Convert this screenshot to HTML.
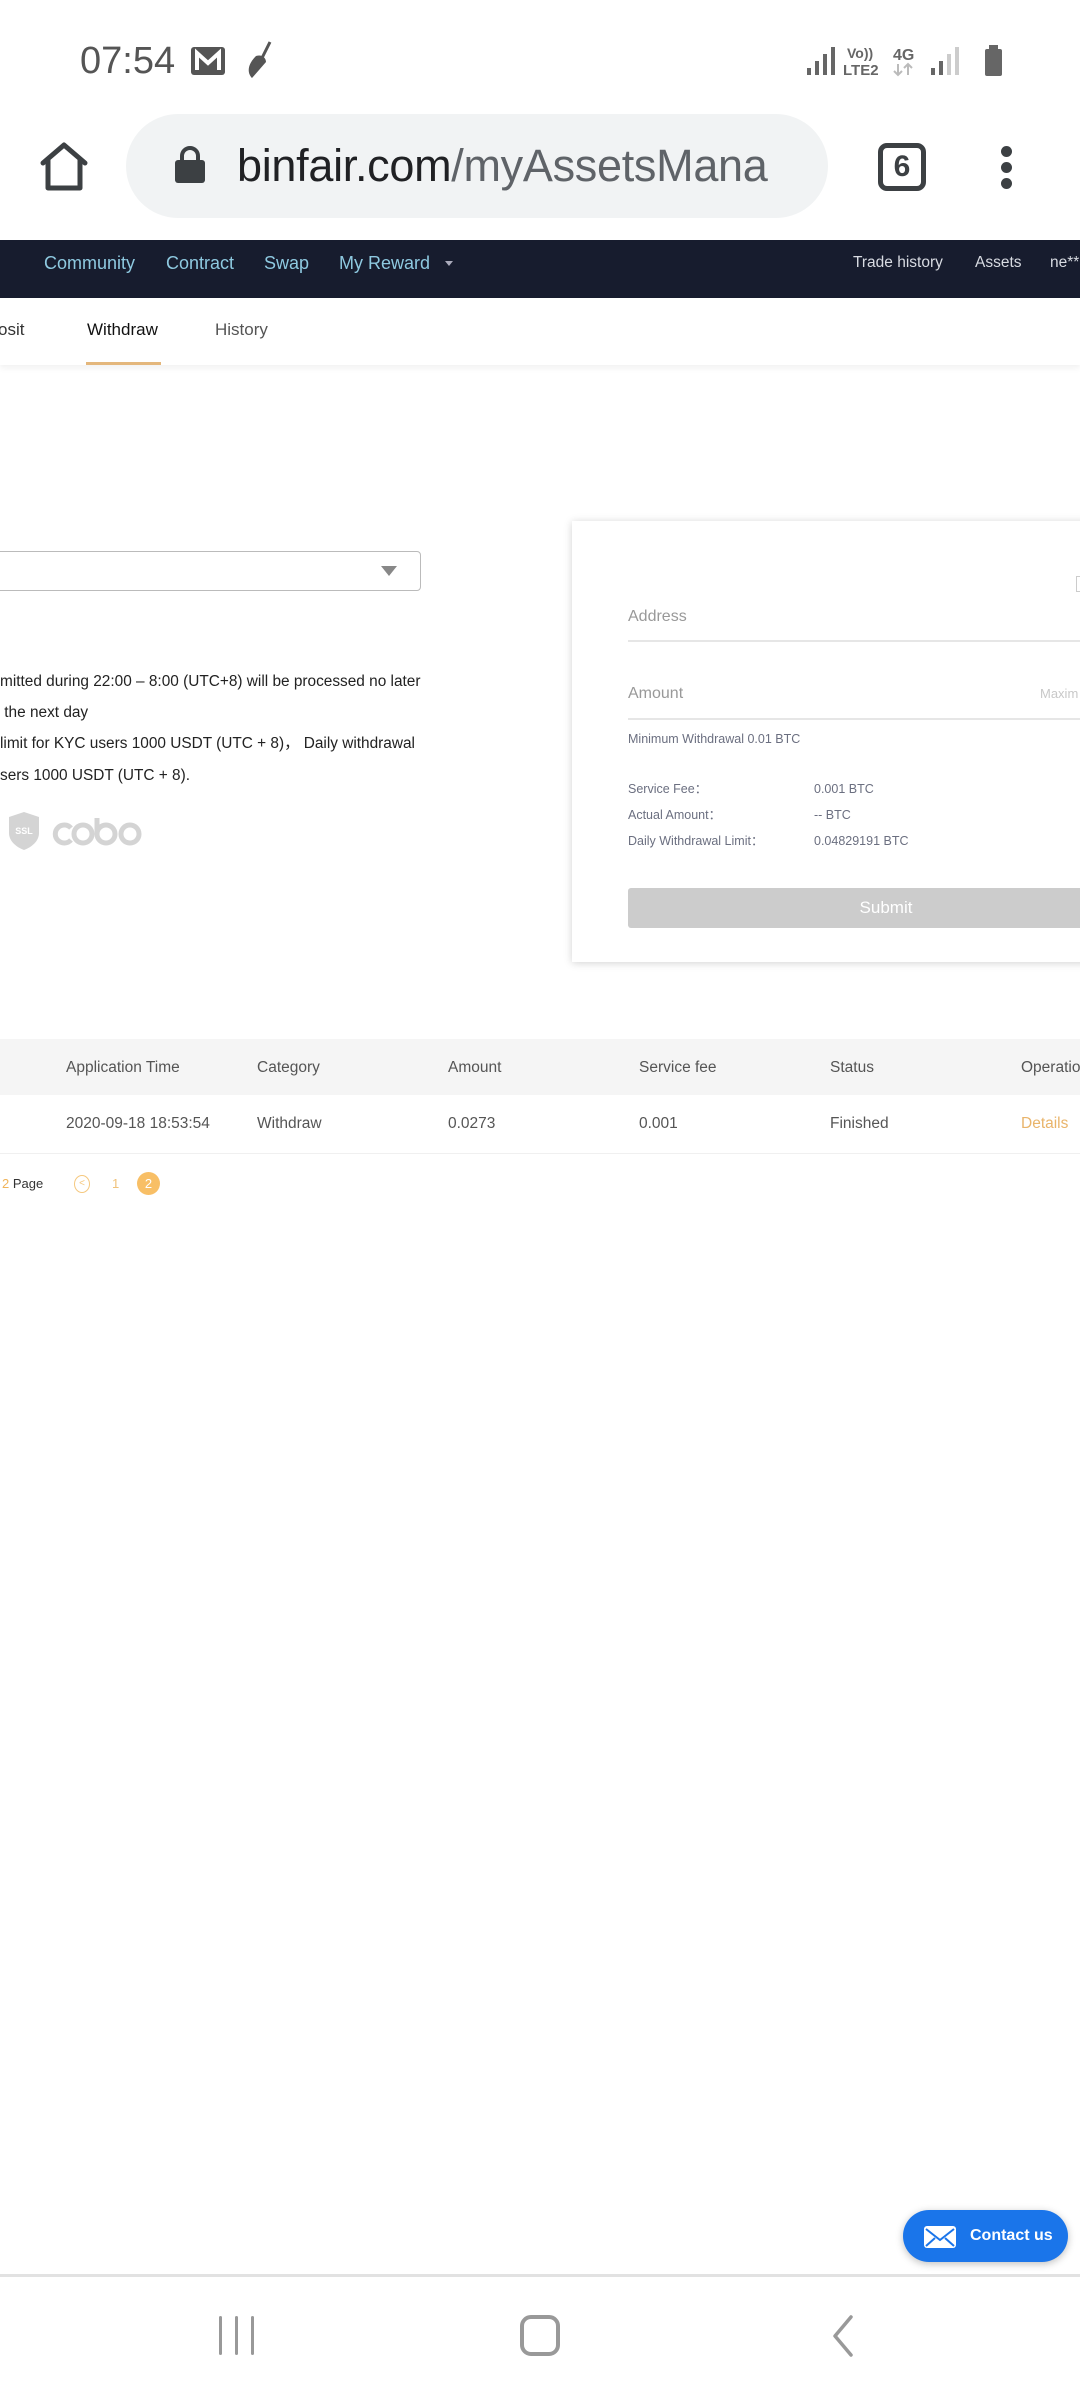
<!DOCTYPE html>
<html><head><meta charset="utf-8">
<style>
*{margin:0;padding:0;box-sizing:border-box}
body{width:1080px;height:2400px;position:relative;overflow:hidden;background:#fff;font-family:"Liberation Sans",sans-serif}
.a{position:absolute;white-space:nowrap}
</style></head><body>
<!-- status bar -->
<div class="a" style="left:80px;top:38px;font-size:38px;color:#555;line-height:46px">07:54</div>
<svg class="a" style="left:190px;top:46px" width="36" height="30" viewBox="0 0 36 30"><rect x="1" y="1" width="34" height="28" rx="3" fill="#555"/><path d="M7 24V7l11 10 11-10v17" stroke="#fff" stroke-width="4" fill="none"/></svg>
<svg class="a" style="left:244px;top:40px" width="32" height="40" viewBox="0 0 32 40"><path d="M26 2 18 18" stroke="#555" stroke-width="3"/><path d="M12 16c6-2 10 2 10 6L8 38c-4-4-6-12 4-22z" fill="#555"/></svg>
<svg class="a" style="left:805px;top:44px" width="200" height="34" viewBox="0 0 200 34">
<rect x="2" y="24" width="4" height="7" fill="#666"/><rect x="10" y="17" width="4" height="14" fill="#666"/><rect x="18" y="10" width="4" height="21" fill="#666"/><rect x="26" y="3" width="4" height="28" fill="#666"/>
<text x="42" y="14" font-size="14" font-weight="bold" fill="#666" font-family="Liberation Sans">Vo))</text>
<text x="38" y="31" font-size="15" font-weight="bold" fill="#666" font-family="Liberation Sans">LTE2</text>
<text x="88" y="16" font-size="16" font-weight="bold" fill="#666" font-family="Liberation Sans">4G</text>
<path d="M93 20v11M89 27l4 4 4-4M103 31V20M99 24l4-4 4 4" stroke="#bbb" stroke-width="2" fill="none"/>
<rect x="126" y="24" width="4" height="7" fill="#666"/><rect x="134" y="17" width="4" height="14" fill="#666"/><rect x="142" y="10" width="4" height="21" fill="#ccc"/><rect x="150" y="3" width="4" height="28" fill="#ccc"/>
<rect x="180" y="5" width="17" height="27" rx="2" fill="#666"/><rect x="184" y="1" width="9" height="5" fill="#666"/>
</svg>
<!-- url bar -->
<svg class="a" style="left:38px;top:141px" width="52" height="52" viewBox="0 0 52 52"><path d="M5 22 26 4l21 18M10 19v28h32V19" stroke="#3c4043" stroke-width="5" fill="none" stroke-linejoin="round" stroke-linecap="round"/></svg>
<div class="a" style="left:126px;top:114px;width:702px;height:104px;border-radius:52px;background:#f1f3f4"></div>
<svg class="a" style="left:174px;top:146px" width="32" height="38" viewBox="0 0 32 38"><path d="M8 15V10a8 8 0 0 1 16 0v5" stroke="#3c4043" stroke-width="4" fill="none"/><rect x="1" y="14" width="30" height="23" rx="3" fill="#3c4043"/></svg>
<div class="a" style="left:237px;top:138px;font-size:45px;line-height:56px;color:#202124;letter-spacing:-0.3px">binfair.com<span style="color:#5f6368">/myAssetsMana</span></div>
<div class="a" style="left:878px;top:143px;width:48px;height:48px;border:5px solid #3c4043;border-radius:9px;font-size:30px;font-weight:bold;color:#3c4043;text-align:center;line-height:38px">6</div>
<div class="a" style="left:1001px;top:146px;width:11px;height:11px;border-radius:50%;background:#3c4043"></div>
<div class="a" style="left:1001px;top:162px;width:11px;height:11px;border-radius:50%;background:#3c4043"></div>
<div class="a" style="left:1001px;top:178px;width:11px;height:11px;border-radius:50%;background:#3c4043"></div>
<!-- nav -->
<div class="a" style="left:0;top:240px;width:1080px;height:58px;background:#171c2e"></div>
<div class="a" style="left:44px;top:234px;line-height:58px;font-size:18px;color:#8ec9e0">Community</div>
<div class="a" style="left:166px;top:234px;line-height:58px;font-size:18px;color:#8ec9e0">Contract</div>
<div class="a" style="left:264px;top:234px;line-height:58px;font-size:18px;color:#8ec9e0">Swap</div>
<div class="a" style="left:339px;top:234px;line-height:58px;font-size:18px;color:#8ec9e0">My Reward</div>
<div class="a" style="left:445px;top:261px;width:0;height:0;border-left:4px solid transparent;border-right:4px solid transparent;border-top:5px solid #aab"></div>
<div class="a" style="left:853px;top:234px;line-height:58px;font-size:15.5px;color:#d8dbe2">Trade history</div>
<div class="a" style="left:975px;top:234px;line-height:58px;font-size:15.5px;color:#d8dbe2">Assets</div>
<div class="a" style="left:1050px;top:234px;line-height:58px;font-size:15.5px;color:#d8dbe2">ne**</div>
<!-- tabs -->
<div class="a" style="left:0;top:298px;width:1080px;height:67px;background:#fff;box-shadow:0 3px 6px rgba(0,0,0,.06)"></div>
<div class="a" style="left:-2px;top:316px;font-size:17px;line-height:28px;color:#333">osit</div>
<div class="a" style="left:87px;top:316px;font-size:17px;line-height:28px;color:#111">Withdraw</div>
<div class="a" style="left:215px;top:316px;font-size:17px;line-height:28px;color:#555">History</div>
<div class="a" style="left:86px;top:362px;width:75px;height:3px;background:#e4b77c"></div>
<!-- select -->
<div class="a" style="left:-10px;top:551px;width:431px;height:40px;border:1.5px solid #bbb;border-radius:4px"></div>
<div class="a" style="left:381px;top:566px;border-left:8px solid transparent;border-right:8px solid transparent;border-top:10px solid #888;height:0;width:0"></div>
<!-- notes -->
<div class="a" style="left:0;top:666px;font-size:15.4px;line-height:31.2px;color:#222">mitted during 22:00 – 8:00 (UTC+8) will be processed no later<br>&nbsp;the next day<br>limit for KYC users 1000 USDT (UTC + 8)，&nbsp;Daily withdrawal<br>sers 1000 USDT (UTC + 8).</div>
<svg class="a" style="left:8px;top:811px" width="32" height="40" viewBox="0 0 32 40"><path d="M1 6 16 1l15 5v16c0 8-7 14-15 17C8 36 1 30 1 22z" fill="#d4d4d4"/><text x="16" y="23" font-size="9" font-weight="bold" fill="#fff" text-anchor="middle" font-family="Liberation Sans">SSL</text></svg>
<svg class="a" style="left:50px;top:816px" width="96" height="34" viewBox="0 0 96 34"><g stroke="#d4d4d4" stroke-width="5" fill="none"><path d="M21 12a9 9 0 1 0 0 12"/><circle cx="33" cy="18" r="9"/><path d="M47 2v16"/><circle cx="56" cy="18" r="9"/><circle cx="80" cy="18" r="9"/></g></svg>
<!-- card -->
<div class="a" style="left:572px;top:521px;width:540px;height:441px;background:#fff;box-shadow:0 1px 8px rgba(0,0,0,.18)"></div>
<div class="a" style="left:1076px;top:576px;width:8px;height:16px;border:1px solid #ccc"></div>
<div class="a" style="left:628px;top:605px;font-size:16px;line-height:24px;color:#999">Address</div>
<div class="a" style="left:628px;top:640px;width:460px;height:2px;background:#e6e6e6"></div>
<div class="a" style="left:628px;top:682px;font-size:16px;line-height:24px;color:#999">Amount</div>
<div class="a" style="left:1040px;top:685px;font-size:13px;line-height:18px;color:#c8c8c8">Maxim</div>
<div class="a" style="left:628px;top:718px;width:460px;height:2px;background:#e6e6e6"></div>
<div class="a" style="left:628px;top:730px;font-size:12.5px;line-height:18px;color:#6b6f80">Minimum Withdrawal 0.01 BTC</div>
<div class="a" style="left:628px;top:780px;font-size:12.5px;line-height:18px;color:#6b6f80">Service Fee：</div>
<div class="a" style="left:814px;top:780px;font-size:12.5px;line-height:18px;color:#6b6f80">0.001 BTC</div>
<div class="a" style="left:628px;top:806px;font-size:12.5px;line-height:18px;color:#6b6f80">Actual Amount：</div>
<div class="a" style="left:814px;top:806px;font-size:12.5px;line-height:18px;color:#6b6f80">-- BTC</div>
<div class="a" style="left:628px;top:832px;font-size:12.5px;line-height:18px;color:#6b6f80">Daily Withdrawal Limit：</div>
<div class="a" style="left:814px;top:832px;font-size:12.5px;line-height:18px;color:#6b6f80">0.04829191 BTC</div>
<div class="a" style="left:628px;top:888px;width:516px;height:40px;background:#cccccc;border-radius:3px;color:#fff;font-size:17px;line-height:40px;text-align:center">Submit</div>
<!-- table -->
<div class="a" style="left:0;top:1039px;width:1080px;height:56px;background:#f5f5f5"></div>
<div class="a" style="left:0;top:1153px;width:1080px;height:1px;background:#f0f0f0"></div>
<div class="a" style="left:66px;top:1057px;font-size:15.5px;line-height:22px;color:#555">Application Time</div>
<div class="a" style="left:257px;top:1057px;font-size:15.5px;line-height:22px;color:#555">Category</div>
<div class="a" style="left:448px;top:1057px;font-size:15.5px;line-height:22px;color:#555">Amount</div>
<div class="a" style="left:639px;top:1057px;font-size:15.5px;line-height:22px;color:#555">Service fee</div>
<div class="a" style="left:830px;top:1057px;font-size:15.5px;line-height:22px;color:#555">Status</div>
<div class="a" style="left:1021px;top:1057px;font-size:15.5px;line-height:22px;color:#555">Operation</div>
<div class="a" style="left:66px;top:1113px;font-size:15.5px;line-height:22px;color:#555">2020-09-18 18:53:54</div>
<div class="a" style="left:257px;top:1113px;font-size:15.5px;line-height:22px;color:#555">Withdraw</div>
<div class="a" style="left:448px;top:1113px;font-size:15.5px;line-height:22px;color:#555">0.0273</div>
<div class="a" style="left:639px;top:1113px;font-size:15.5px;line-height:22px;color:#555">0.001</div>
<div class="a" style="left:830px;top:1113px;font-size:15.5px;line-height:22px;color:#555">Finished</div>
<div class="a" style="left:1021px;top:1113px;font-size:15.5px;line-height:22px;color:#e9b46a">Details</div>
<!-- pagination -->
<div class="a" style="left:2px;top:1175px;font-size:13px;line-height:18px;color:#333"><span style="color:#f0b45a">2</span> Page</div>
<div class="a" style="left:74px;top:1175px;width:16px;height:18px;border:1.5px solid #f5c87f;border-radius:50%;font-size:10px;line-height:15px;text-align:center;color:#f5c87f">&lt;</div>
<div class="a" style="left:112px;top:1175px;font-size:13px;line-height:18px;color:#f0c27a">1</div>
<div class="a" style="left:137px;top:1172px;width:23px;height:23px;border-radius:50%;background:#f8bf66;color:#fff;font-size:13px;line-height:23px;text-align:center">2</div>
<!-- contact -->
<div class="a" style="left:903px;top:2210px;width:165px;height:52px;border-radius:26px;background:#1a75ea;box-shadow:0 2px 8px rgba(0,0,0,.25)"></div>
<svg class="a" style="left:924px;top:2226px" width="32" height="22" viewBox="0 0 32 22"><rect x="0" y="0" width="32" height="22" rx="3" fill="#fff"/><path d="M2 3l14 11L30 3M2 20l9-8M30 20l-9-8" stroke="#1a75ea" stroke-width="2" fill="none"/></svg>
<div class="a" style="left:970px;top:2224px;font-size:16px;line-height:24px;font-weight:bold;color:#fff">Contact us</div>
<!-- bottom nav -->
<div class="a" style="left:0;top:2274px;width:1080px;height:3px;background:#e2e2e2"></div>
<div class="a" style="left:219px;top:2316px;width:3px;height:39px;background:#999;border-radius:2px"></div>
<div class="a" style="left:235px;top:2316px;width:3px;height:39px;background:#999;border-radius:2px"></div>
<div class="a" style="left:251px;top:2316px;width:3px;height:39px;background:#999;border-radius:2px"></div>
<div class="a" style="left:520px;top:2315px;width:40px;height:41px;border:4px solid #999;border-radius:11px"></div>
<svg class="a" style="left:828px;top:2314px" width="28" height="44" viewBox="0 0 28 44"><path d="M23 3 7 22l16 19" stroke="#999" stroke-width="3.5" fill="none" stroke-linecap="round" stroke-linejoin="round"/></svg>
</body></html>
